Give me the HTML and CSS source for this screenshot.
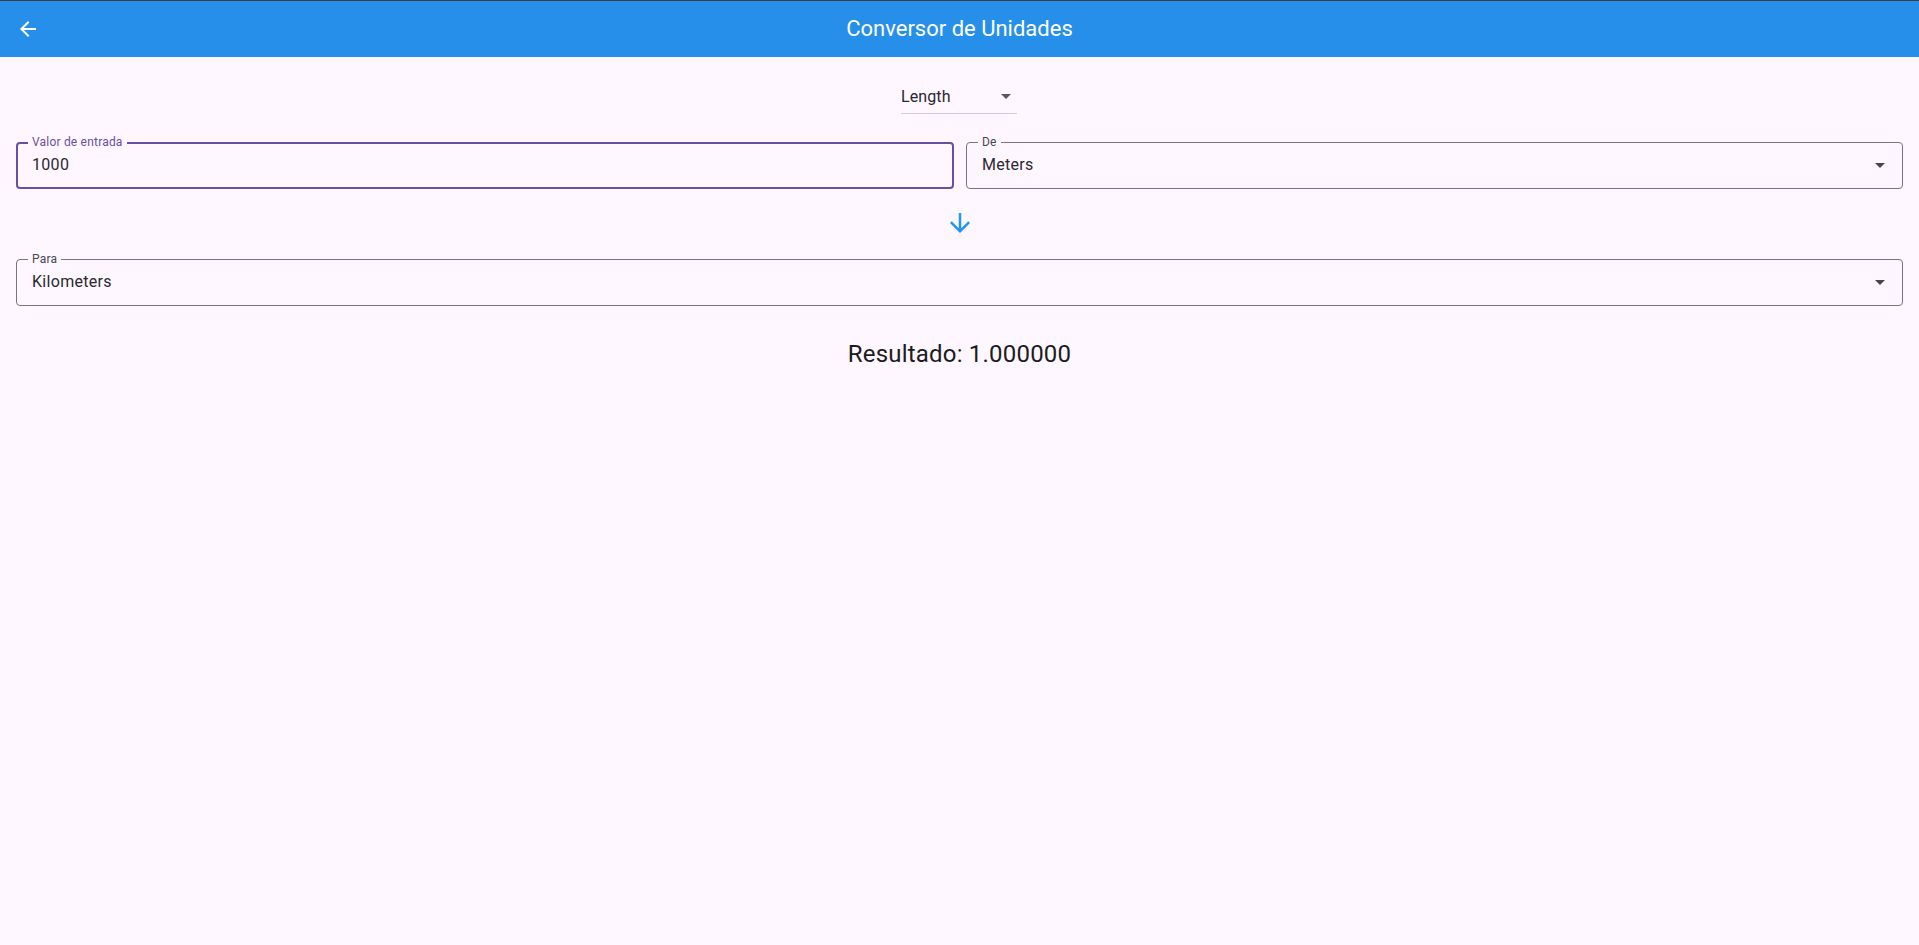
FILE: index.html
```html
<!DOCTYPE html>
<html lang="pt">
<head>
<meta charset="utf-8">
<title>Conversor de Unidades</title>
<link rel="stylesheet" href="styles.css">
</head>
<body>
<header class="appbar">
  <button class="back" aria-label="Voltar">
    <svg width="24" height="24" viewBox="0 0 24 24"><path fill="#fff" d="M20 11H7.83l5.59-5.59L12 4l-8 8 8 8 1.41-1.41L7.83 13H20v-2z"/></svg>
  </button>
  <h1 class="title">Conversor de Unidades</h1>
</header>
<main class="content">
  <div class="category-wrap">
    <div class="category">
      <span class="category-text">Length</span>
      <span class="tri small"></span>
    </div>
  </div>
  <div class="row">
    <div class="field focused">
      <span class="label">Valor de entrada</span>
      <span class="value">1000</span>
    </div>
    <div class="field">
      <span class="label">De</span>
      <span class="value">Meters</span>
      <span class="tri"></span>
    </div>
  </div>
  <div class="swap">
    <svg width="30" height="30" viewBox="0 0 24 24"><path fill="#2196F3" d="M20 12l-1.41-1.41L13 16.17V4h-2v12.17l-5.58-5.59L4 12l8 8 8-8z"/></svg>
  </div>
  <div class="field">
    <span class="label">Para</span>
    <span class="value">Kilometers</span>
    <span class="tri"></span>
  </div>
  <p class="result">Resultado: 1.000000</p>
</main>
</body>
</html>
```

FILE: styles.css
```css
* { box-sizing: border-box; }
html, body { margin: 0; height: 100%; }
body {
  background: #FEF7FF;
  font-family: Roboto, "Noto Sans", sans-serif;
  color: #1D1B20;
}
.appbar {
  height: 57px;
  border-top: 1px solid #3d3d3d;
  background: #268FEA;
  display: flex;
  align-items: center;
  position: relative;
}
.back {
  background: none;
  border: 0;
  padding: 0;
  margin-left: 16px;
  width: 24px;
  height: 24px;
  display: flex;
}
.title {
  flex: 1;
  margin: 0 0 0 -40px;
  text-align: center;
  font-size: 22px;
  font-weight: 400;
  color: #fff;
  line-height: 28px;
}
.content {
  padding: 0 16px;
}
.category-wrap {
  display: flex;
  justify-content: center;
  padding-top: 30px;
}
.category {
  width: 116px;
  height: 27px;
  border-bottom: 1px solid #d4ced8;
  display: flex;
  align-items: flex-start;
  justify-content: space-between;
  padding-right: 6px;
  margin-left: -1px;
}
.category-text {
  font-size: 16px;
  line-height: 20px;
  letter-spacing: 0.1px;
  color: #2a2730;
}
.tri {
  width: 0;
  height: 0;
  border-left: 5px solid transparent;
  border-right: 5px solid transparent;
  border-top: 5px solid #49454F;
}
.tri.small {
  margin-top: 7px;
  border-top: 5px solid #5a5660;
}
.row {
  display: flex;
  gap: 12px;
  margin-top: 28px;
}
.row .field { flex: 1; }
.field {
  position: relative;
  height: 47px;
  border: 1px solid #79747E;
  border-radius: 4px;
  display: flex;
  align-items: center;
  padding: 0 17px 0 15px;
}
.field.focused {
  border: 2px solid #6750A4;
  padding-left: 14px;
}
.label {
  position: absolute;
  top: -9px;
  left: 11px;
  padding: 0 4px;
  background: #FEF7FF;
  font-size: 12px;
  line-height: 16px;
  color: #49454F;
  letter-spacing: 0.2px;
}
.focused .label {
  left: 10px;
  top: -10px;
  color: #6750A4;
}
.value {
  flex: 1;
  font-size: 16px;
  line-height: 24px;
  letter-spacing: 0.3px;
  margin-top: -1px;
  color: #2a2730;
}
.swap {
  display: flex;
  justify-content: center;
  padding: 19px 0 21px;
}
.swap svg { display: block; }
.result {
  margin: 32px 0 0;
  text-align: center;
  font-size: 24px;
  line-height: 32px;
  font-weight: 400;
  letter-spacing: 0.2px;
}
```
